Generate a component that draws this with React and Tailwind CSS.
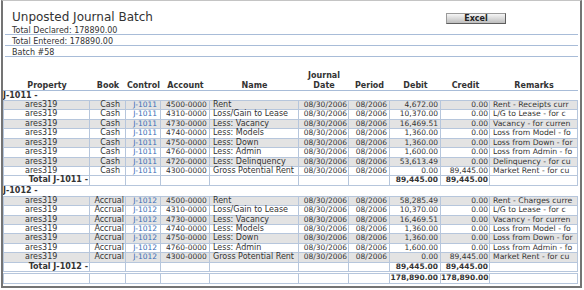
import React from 'react';

const cols = 'grid grid-cols-[86px_36px_35px_49px_89px_50px_41px_51px_49px_88px]';
const cell = 'border-r border-[#b6c6dc] overflow-x-clip whitespace-nowrap leading-[8.43px]';

const batches = [
  {
    id: 'J-1011',
    book: 'Cash',
    bookPad: 'pr-[5px]',
    total: ['89,445.00', '89,445.00'],
    rows: [
      ['4500-0000', 'Rent', '4,672.00', '0.00', 'Rent - Receipts curr'],
      ['4310-0000', 'Loss/Gain to Lease', '10,370.00', '0.00', 'L/G to Lease - for c'],
      ['4730-0000', 'Less: Vacancy', '16,469.51', '0.00', 'Vacancy - for curren'],
      ['4740-0000', 'Less: Models', '1,360.00', '0.00', 'Loss from Model - fo'],
      ['4750-0000', 'Less: Down', '1,360.00', '0.00', 'Loss from Down - for'],
      ['4760-0000', 'Less: Admin', '1,600.00', '0.00', 'Loss from Admin - fo'],
      ['4720-0000', 'Less: Delinquency', '53,613.49', '0.00', 'Delinquency - for cu'],
      ['4300-0000', 'Gross Potential Rent', '0.00', '89,445.00', 'Market Rent - for cu'],
    ],
  },
  {
    id: 'J-1012',
    book: 'Accrual',
    bookPad: 'pr-[1px]',
    total: ['89,445.00', '89,445.00'],
    rows: [
      ['4500-0000', 'Rent', '58,285.49', '0.00', 'Rent - Charges curre'],
      ['4310-0000', 'Loss/Gain to Lease', '10,370.00', '0.00', 'L/G to Lease - for c'],
      ['4730-0000', 'Less: Vacancy', '16,469.51', '0.00', 'Vacancy - for curren'],
      ['4740-0000', 'Less: Models', '1,360.00', '0.00', 'Loss from Model - fo'],
      ['4750-0000', 'Less: Down', '1,360.00', '0.00', 'Loss from Down - for'],
      ['4760-0000', 'Less: Admin', '1,600.00', '0.00', 'Loss from Admin - fo'],
      ['4300-0000', 'Gross Potential Rent', '0.00', '89,445.00', 'Market Rent - for cu'],
    ],
  },
];

function DataRow({ batch, row, gray }) {
  const [account, name, debit, credit, remarks] = row;
  return (
    <div className={`${cols} h-[9.43px] border-b border-[#b6c6dc] ${gray ? 'bg-[#e3e3e3]' : 'bg-white'}`}>
      <div className={`${cell} pl-[21px] text-[8px]`}>ares319</div>
      <div className={`${cell} text-right ${batch.bookPad} text-[8px]`}>{batch.book}</div>
      <div className={`${cell} text-right pr-[3px] text-[7.5px] text-[#3a6db5]`}>{batch.id}</div>
      <div className={`${cell} pl-[5px] text-[7.5px]`}>{account}</div>
      <div className={`${cell} pl-[3px] text-[8px]`}>{name}</div>
      <div className={`${cell} text-right pr-[1px] text-[7.5px]`}>08/30/2006</div>
      <div className={`${cell} text-right pr-[2px] text-[7.5px]`}>08/2006</div>
      <div className={`${cell} text-right pr-[2px] text-[7.5px]`}>{debit}</div>
      <div className={`${cell} text-right pr-[1px] text-[7.5px]`}>{credit}</div>
      <div className={`${cell} pl-[3px] text-[7.7px]`}>{remarks}</div>
    </div>
  );
}

function TotalRow({ label, debit, credit }) {
  return (
    <div className={`${cols} h-[9.43px] border-b border-[#b6c6dc] bg-white font-bold`}>
      <div className={`${cell} text-right pr-[1px] text-[8px]`}>{label}</div>
      <div className={cell}></div>
      <div className={cell}></div>
      <div className={cell}></div>
      <div className={cell}></div>
      <div className={cell}></div>
      <div className={cell}></div>
      <div className={`${cell} text-right pr-[2px] text-[7.5px]`}>{debit}</div>
      <div className={`${cell} text-right pr-[1px] text-[7.5px]`}>{credit}</div>
      <div className={cell}></div>
    </div>
  );
}

function Batch({ batch, last }) {
  return (
    <div>
      <div className={`${last ? 'h-[10px] leading-[10px]' : 'h-[9px] leading-[9px]'} text-[8px] font-bold`}>{batch.id} -</div>
      <div className="w-[575px] border-l border-t border-[#b6c6dc]">
        {batch.rows.map((r, i) => (
          <DataRow key={i} batch={batch} row={r} gray={i % 2 === 0} />
        ))}
        <TotalRow label={`Total ${batch.id} -`} debit={batch.total[0]} credit={batch.total[1]} />
      </div>
      {last && (
        <div className="mt-px w-[575px] border-l border-t border-[#b6c6dc]">
          <TotalRow label="" debit="178,890.00" credit="178,890.00" />
        </div>
      )}
    </div>
  );
}

const headers = ['Property', 'Book', 'Control', 'Account', 'Name', ['Journal', 'Date'], 'Period', 'Debit', 'Credit', 'Remarks'];

export default function App() {
  return (
    <div className="w-[584px] h-[290px] bg-white text-[#333] font-['DejaVu_Sans',Verdana,sans-serif]">
      <div className="ml-px w-[581px] h-[288px] border-t border-t-[#c4c4c4] border-x-2 border-b-2 border-x-[#747474] border-b-[#747474] overflow-hidden">
        <div className="mt-[9px] h-[14px] flex items-start">
          <h1 className="pl-[9px] text-[12px] leading-[14px] text-[#333]">Unposted Journal Batch</h1>
          <button className="ml-auto mr-[74px] mt-[3px] w-[60px] h-[11px] border border-[#5e5e5e] border-t-[#9a9a9a] border-l-[#9a9a9a] bg-gradient-to-b from-[#f6f6f6] to-[#bdbdbd] text-[8px] leading-[9px] font-bold text-[#222]">
            Excel
          </button>
        </div>
        <div className="mx-[2px] text-[8px] leading-[8px]">
          <div className="h-[11px] pt-[3px] pl-[7px] border-b border-[#a8bcd8]">Total Declared: 178890.00</div>
          <div className="h-[11px] pt-[3px] pl-[7px] border-b border-[#a8bcd8]">Total Entered: 178890.00</div>
          <div className="h-[11px] pt-[3px] pl-[7px] border-b border-[#a8bcd8]">Batch #58</div>
        </div>
        <div className={`${cols} w-[575px] pl-px h-[34px] items-end border-b border-[#a8bcd8] text-[8px] leading-[10px] font-bold`}>
          {headers.map((h, i) => (
            <div key={i} className="text-center translate-y-px">
              {Array.isArray(h) ? (
                <>
                  <div>{h[0]}</div>
                  <div>{h[1]}</div>
                </>
              ) : (
                h
              )}
            </div>
          ))}
        </div>
        {batches.map((b, i) => (
          <Batch key={b.id} batch={b} last={i === batches.length - 1} />
        ))}
      </div>
    </div>
  );
}
